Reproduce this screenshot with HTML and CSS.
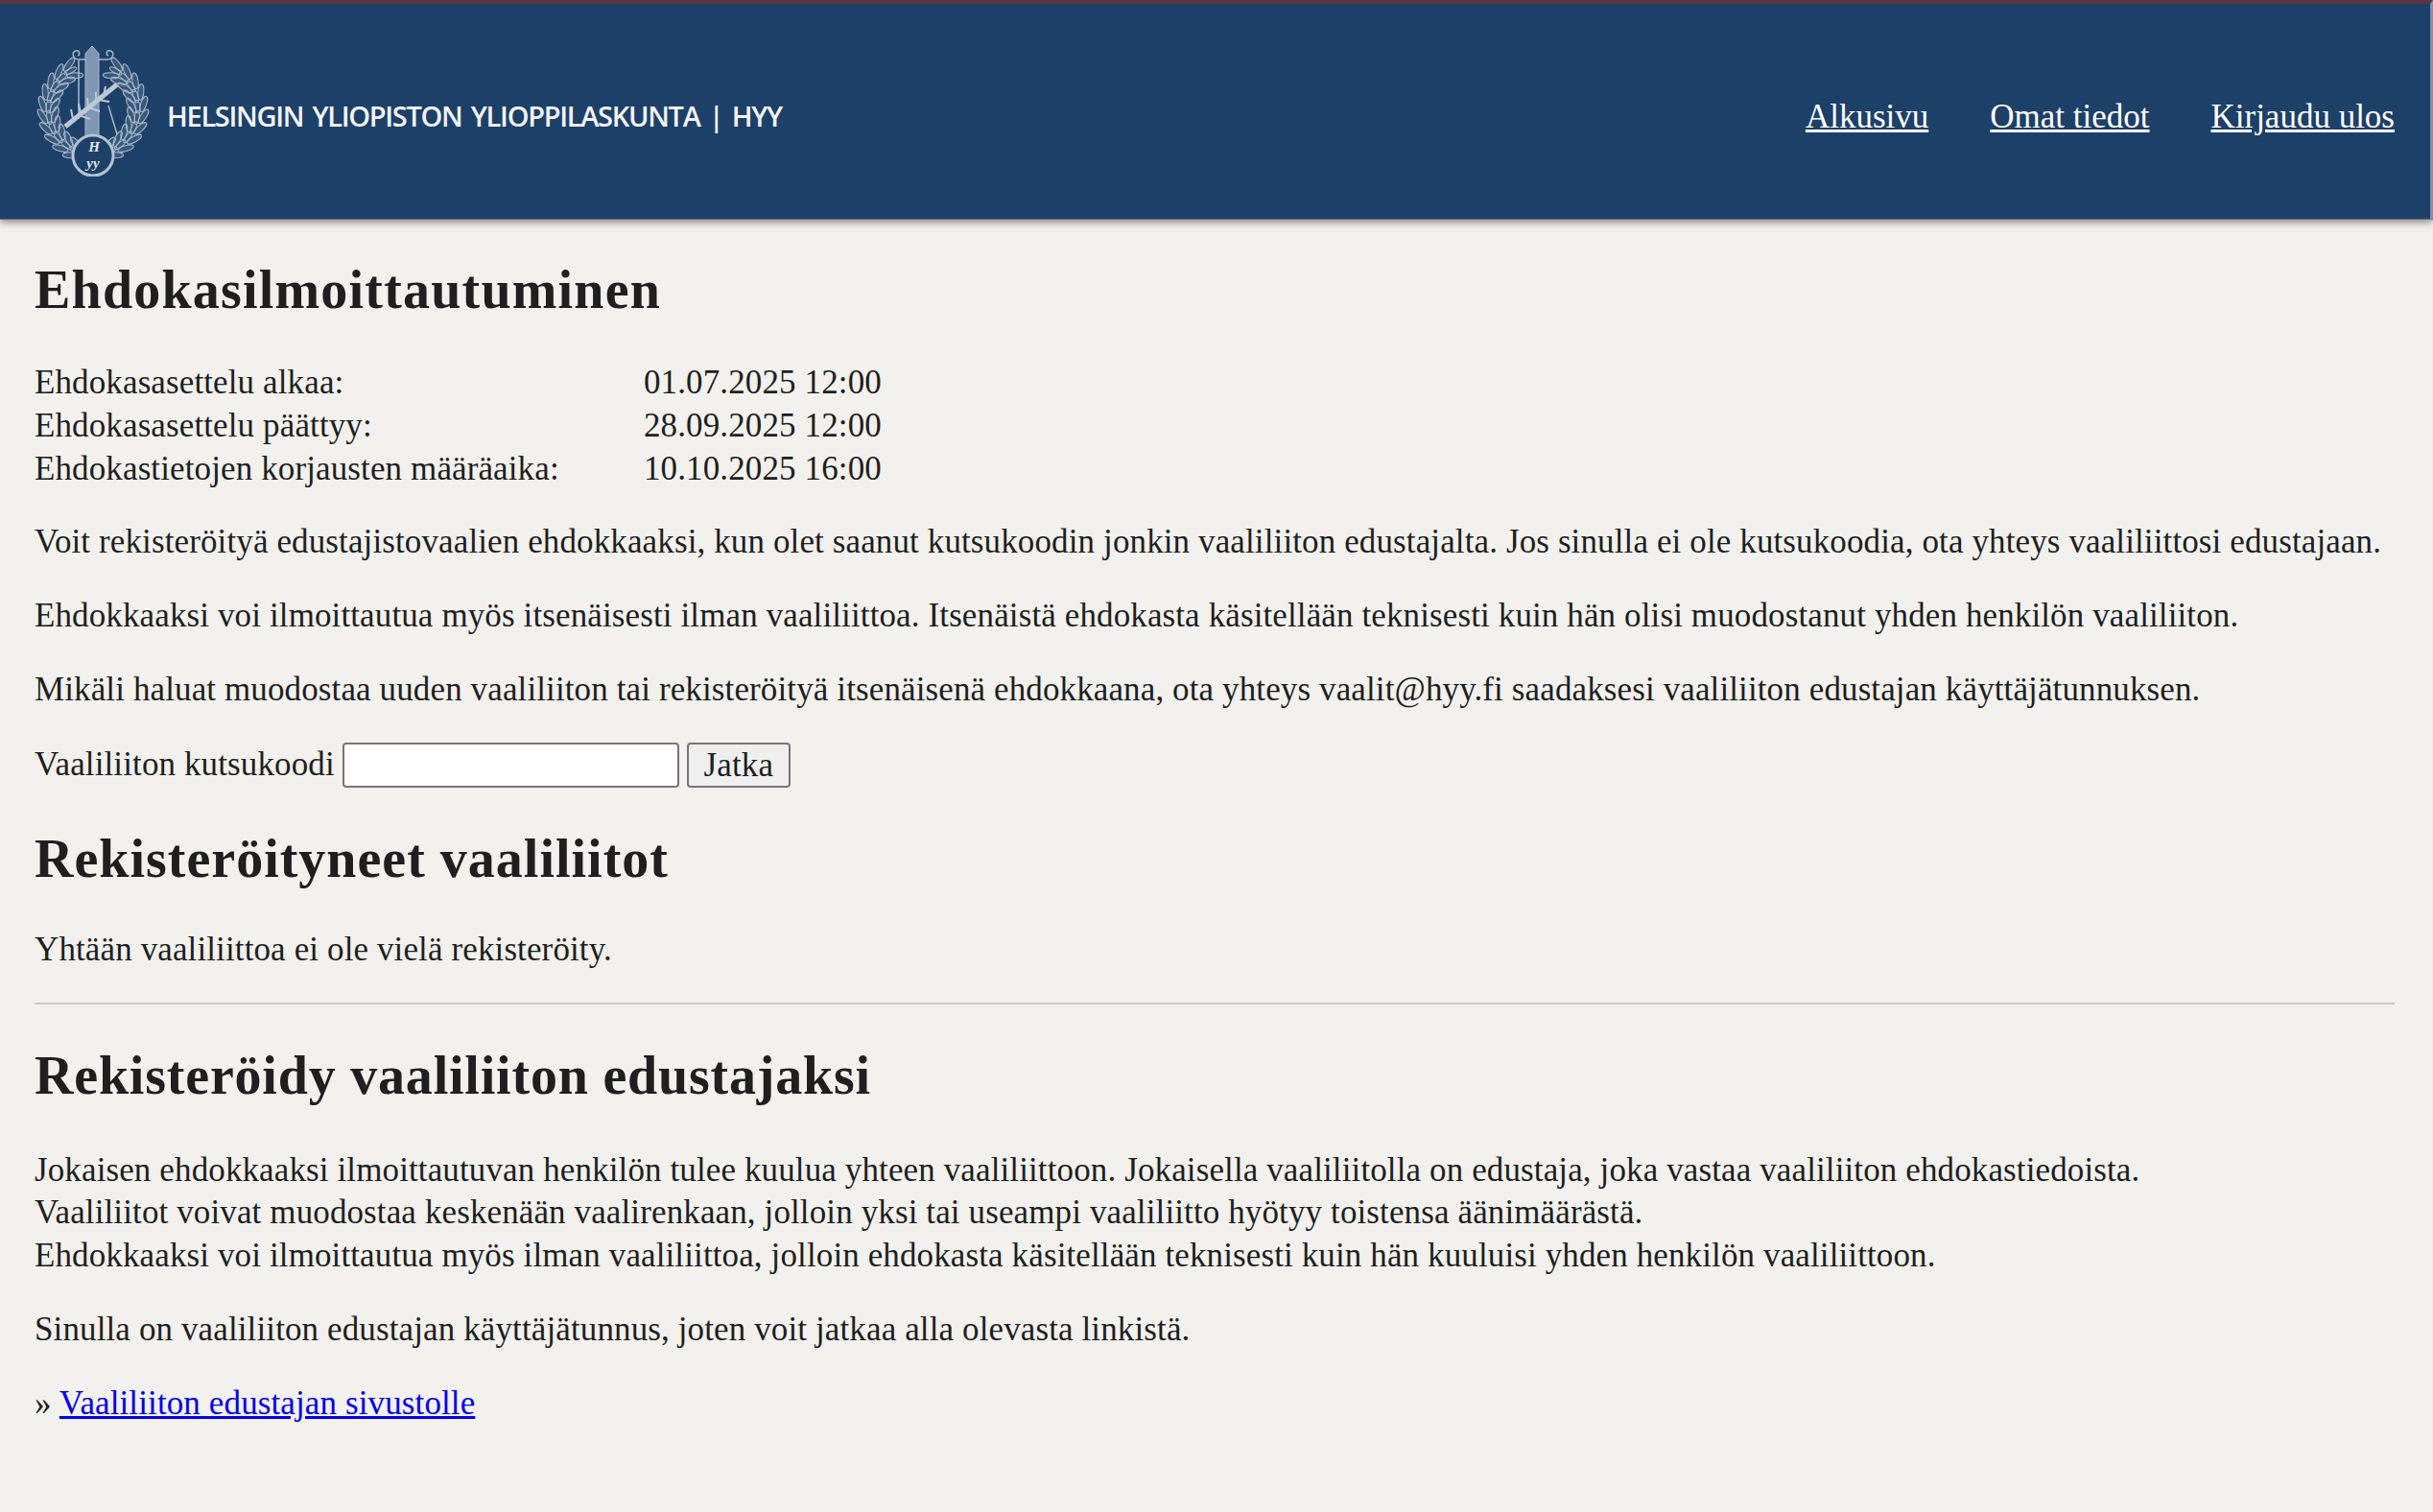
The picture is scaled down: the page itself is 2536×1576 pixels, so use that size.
FILE: index.html
```html
<!DOCTYPE html>
<html lang="fi">

<head>
  <meta charset="UTF-8">
  <title>Ehdokasilmoittautuminen</title>
  <link rel="stylesheet" href="styles.css">
</head>

<body>
  <header class="site-header">
    <a class="logo" href="#">
      <svg class="emblem" viewBox="0 0 118 136" width="118" height="136">
        <defs>
          <g id="leaf">
            <ellipse cx="59" cy="13" rx="8.5" ry="3" transform="rotate(25 59 13)"/>
            <ellipse cx="59" cy="26" rx="8.5" ry="3" transform="rotate(-25 59 26)"/>
            <ellipse cx="61" cy="19.5" rx="7" ry="2.4"/>
          </g>
          <g id="wing">
            <use href="#leaf" transform="rotate(28 59 66)"/>
            <use href="#leaf" transform="rotate(42 59 66)"/>
            <use href="#leaf" transform="rotate(56 59 66)"/>
            <use href="#leaf" transform="rotate(70 59 66)"/>
            <use href="#leaf" transform="rotate(84 59 66)"/>
            <use href="#leaf" transform="rotate(98 59 66)"/>
            <use href="#leaf" transform="rotate(112 59 66)"/>
            <use href="#leaf" transform="rotate(126 59 66)"/>
            <use href="#leaf" transform="rotate(140 59 66)"/>
            <use href="#leaf" transform="rotate(154 59 66)"/>
          </g>
        </defs>
        <g class="wreath">
          <use href="#wing"/>
          <use href="#wing" transform="translate(118) scale(-1 1)"/>
        </g>
        <path class="sword" d="M51 8 L58 0 L65 8 V100 H51 Z"/>
        <path class="guard" d="M51 14 H44 C38 14 36 6 41 5 C45 4 46 9 43 10 M65 14 H74 C80 14 82 6 77 5 C73 4 72 9 75 10 M44 14 V76 M75 62 L84 92"/>
        <path class="torch" d="M30 84 L84 40"/>
        <path class="twigs" d="M38 76 L36 66 M46 70 L44 60 M54 64 L53 54 M62 58 L62 48 M70 51 L72 42 M44 72 L56 76 M54 64 L66 68 M64 56 L76 58"/>
        <circle class="medal" cx="59" cy="114" r="21"/>
        <text class="medal-text" x="60" y="109.5">H</text>
        <text class="medal-text" x="59" y="126.5">yy</text>
      </svg>
      <span class="logo-text">HELSINGIN YLIOPISTON YLIOPPILASKUNTA | HYY</span>
    </a>
    <nav class="site-nav">
      <a href="#">Alkusivu</a>
      <a href="#">Omat tiedot</a>
      <a href="#">Kirjaudu ulos</a>
    </nav>
  </header>

  <main class="content">
    <h1>Ehdokasilmoittautuminen</h1>

    <div class="dates">
      <span>Ehdokasasettelu alkaa:</span><span>01.07.2025 12:00</span>
      <span>Ehdokasasettelu päättyy:</span><span>28.09.2025 12:00</span>
      <span>Ehdokastietojen korjausten määräaika:</span><span>10.10.2025 16:00</span>
    </div>

    <p>Voit rekisteröityä edustajistovaalien ehdokkaaksi, kun olet saanut kutsukoodin jonkin vaaliliiton edustajalta. Jos sinulla ei ole kutsukoodia, ota yhteys vaaliliittosi edustajaan.</p>
    <p>Ehdokkaaksi voi ilmoittautua myös itsenäisesti ilman vaaliliittoa. Itsenäistä ehdokasta käsitellään teknisesti kuin hän olisi muodostanut yhden henkilön vaaliliiton.</p>
    <p>Mikäli haluat muodostaa uuden vaaliliiton tai rekisteröityä itsenäisenä ehdokkaana, ota yhteys vaalit@hyy.fi saadaksesi vaaliliiton edustajan käyttäjätunnuksen.</p>

    <form class="code-form">
      <label for="code">Vaaliliiton kutsukoodi</label>
      <input type="text" id="code">
      <button type="button">Jatka</button>
    </form>

    <h2 class="tight">Rekisteröityneet vaaliliitot</h2>
    <p>Yhtään vaaliliittoa ei ole vielä rekisteröity.</p>

    <hr>

    <h2>Rekisteröidy vaaliliiton edustajaksi</h2>
    <p>
      Jokaisen ehdokkaaksi ilmoittautuvan henkilön tulee kuulua yhteen vaaliliittoon. Jokaisella vaaliliitolla on edustaja, joka vastaa vaaliliiton ehdokastiedoista.<br>
      Vaaliliitot voivat muodostaa keskenään vaalirenkaan, jolloin yksi tai useampi vaaliliitto hyötyy toistensa äänimäärästä.<br>
      Ehdokkaaksi voi ilmoittautua myös ilman vaaliliittoa, jolloin ehdokasta käsitellään teknisesti kuin hän kuuluisi yhden henkilön vaaliliittoon.
    </p>
    <p>Sinulla on vaaliliiton edustajan käyttäjätunnus, joten voit jatkaa alla olevasta linkistä.</p>
    <p>» <a href="#">Vaaliliiton edustajan sivustolle</a></p>
  </main>
</body>

</html>
```

FILE: styles.css
```css
body {
  margin: 0;
  background-color: #f2f1ed;
  color: #1f1f1f;
  font-family: "Liberation Serif", serif;
  font-size: 35px;
  line-height: 44.8px;
  letter-spacing: 0.12px;
}

.site-header {
  display: flex;
  justify-content: space-between;
  align-items: center;
  height: 224px;
  padding: 0 37px 0 38px;
  background-color: #1d4068;
  border-top: 4px solid #5a3540;
  border-right: 3px solid #7d92ab;
  box-shadow: 0 1px 0 #6e6e6e, 0 3px 8px rgba(0, 0, 0, 0.5);
}

.logo {
  display: flex;
  align-items: center;
  gap: 18px;
  color: #fff;
  text-decoration: none;
}

.emblem {
  display: block;
}

.wreath {
  fill: rgba(168, 184, 202, 0.2);
  stroke: #a8b8ca;
  stroke-width: 1;
}

.sword {
  fill: #8097b3;
  stroke: #a8b8ca;
}

.guard {
  fill: none;
  stroke: #a8b8ca;
  stroke-width: 1.5;
}

.torch {
  stroke: #bcc8d6;
  stroke-width: 5;
}

.twigs {
  fill: none;
  stroke: #bcc8d6;
  stroke-width: 2;
}

.medal {
  fill: #1d4068;
  stroke: #b4c2d2;
  stroke-width: 3;
}

.medal-text {
  fill: #e4e9ef;
  font-family: "Liberation Serif", serif;
  font-size: 15px;
  font-style: italic;
  font-weight: bold;
  text-anchor: middle;
  letter-spacing: 0;
}

.logo-text {
  padding-top: 10px;
  font-family: "Open Sans", sans-serif;
  font-size: 29px;
  font-weight: 600;
  letter-spacing: -1.3px;
  word-spacing: 3px;
  color: #f2f4f7;
  white-space: nowrap;
}

.site-nav {
  display: flex;
  gap: 64px;
  padding-top: 12px;
  letter-spacing: 0;
}

.site-nav a {
  color: #fff;
}

.content {
  padding: 0 40px 0 36px;
}

h1,
h2 {
  font-size: 56px;
  line-height: 62px;
  letter-spacing: 0.8px;
}

h1 {
  margin: 43px 0 44px;
  letter-spacing: 1.2px;
}

h2 {
  margin: 43px 0 46px;
}

h2.tight {
  margin-bottom: 42px;
  letter-spacing: 1px;
}

p {
  margin: 32px 0;
}

.dates {
  display: grid;
  grid-template-columns: 635px 1fr;
}

.code-form {
  display: flex;
  align-items: center;
  gap: 8px;
  height: 47px;
}

.code-form input {
  box-sizing: border-box;
  width: 351px;
  height: 47px;
  background-color: #fff;
  border: 2px solid #767676;
  border-radius: 4px;
}

.code-form button {
  box-sizing: border-box;
  width: 108px;
  height: 47px;
  padding: 0;
  background-color: #efefef;
  border: 2px solid #767676;
  border-radius: 4px;
  color: #1f1f1f;
  font: inherit;
  letter-spacing: inherit;
}

hr {
  height: 2px;
  margin: 0;
  background-color: #cbcac8;
  border: none;
}
```
